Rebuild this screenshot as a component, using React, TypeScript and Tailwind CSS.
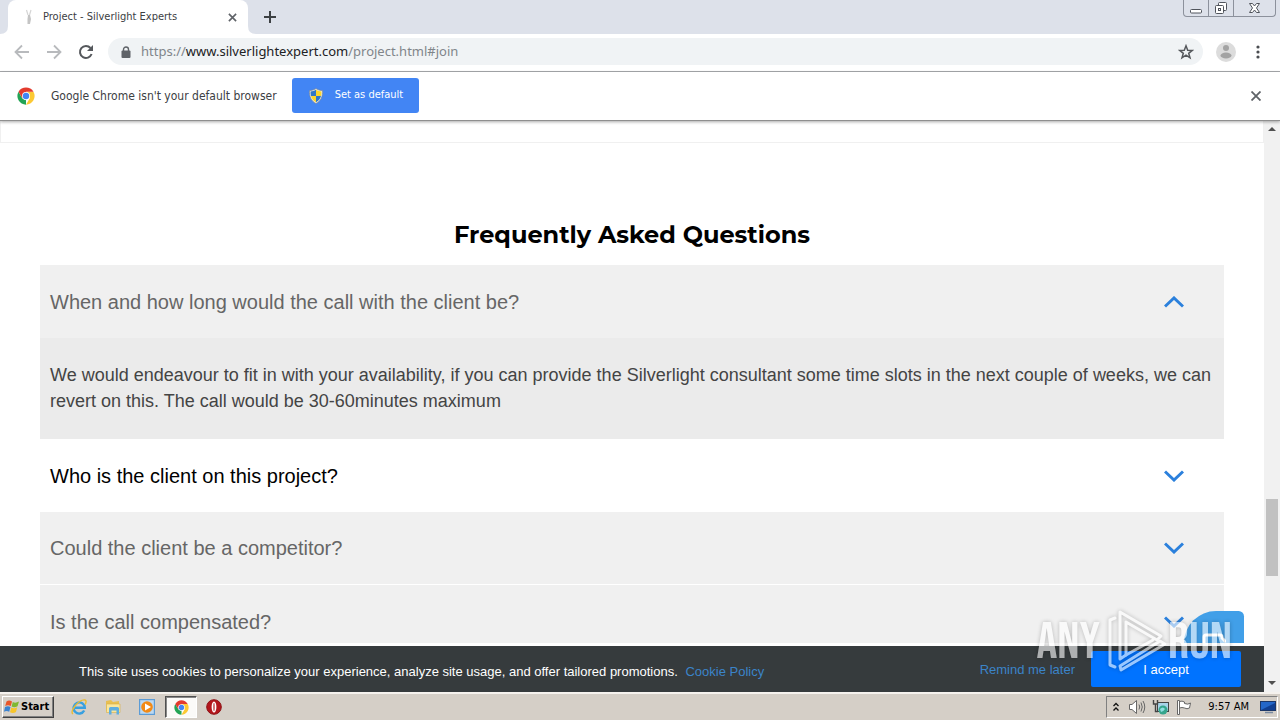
import { useState } from "react";
import type { ReactNode } from "react";

const faqs = [
  {
    q: "When and how long would the call with the client be?",
    a: "We would endeavour to fit in with your availability, if you can provide the Silverlight consultant some time slots in the next couple of weeks, we can revert on this. The call would be 30-60minutes maximum",
    tone: "bg-[#f0f0f0] text-[#666]",
  },
  { q: "Who is the client on this project?", a: "", tone: "bg-white text-black" },
  { q: "Could the client be a competitor?", a: "", tone: "bg-[#f0f0f0] text-[#666] border-b border-white" },
  { q: "Is the call compensated?", a: "", tone: "bg-[#f0f0f0] text-[#666]" },
];

function ChromeLogo({ className }: { className: string }) {
  return (
    <svg viewBox="0 0 48 48" className={className} aria-hidden="true">
      <circle cx="24" cy="24" r="23" fill="#fff" />
      <path d="M4.1 12.5 L14 29.7 L24 35.5 L24 47 A23 23 0 0 1 4.1 12.5 Z" fill="#23a455" />
      <path d="M43.9 12.5 L24 12.5 L34 29.7 L24 47 A23 23 0 0 0 43.9 12.5 Z" fill="#fcc934" />
      <path d="M4.1 12.5 L14 29.7 L24 24 L24 12.5 L43.9 12.5 A23 23 0 0 0 4.1 12.5 Z" fill="#e33b2e" />
      <circle cx="24" cy="24" r="10.5" fill="#fff" />
      <circle cx="24" cy="24" r="8.5" fill="#4285f4" />
    </svg>
  );
}

function Shield() {
  return (
    <svg viewBox="0 0 16 16" className="h-4 w-4" aria-hidden="true">
      <path d="M8 .5 C6 2 3.500 2.500 1.500 2.500 C1 8 3 13 8 15.500 C13 13 15 8 14.500 2.500 C12.500 2.500 10 2 8 .5Z" fill="#e8e8e0" stroke="#77808c" strokeWidth=".6" />
      <path d="M8 1.800 C6.300 3 4.500 3.500 2.600 3.500 C2.500 5 2.600 6.500 3 8 L8 8Z" fill="#2f76c9" />
      <path d="M8 1.800 C9.700 3 11.500 3.500 13.400 3.500 C13.500 5 13.400 6.500 13 8 L8 8Z" fill="#fbd52d" />
      <path d="M3 8 C3.800 10.800 5.400 12.900 8 14.300 L8 8Z" fill="#fbd52d" />
      <path d="M13 8 C12.200 10.800 10.600 12.900 8 14.300 L8 8Z" fill="#2f76c9" />
    </svg>
  );
}

function TitleStrip() {
  return (
    <header className="flex h-[34px] shrink-0 items-start justify-between bg-[#dde1ea]">
      <div className="flex h-full items-end">
        <svg viewBox="0 0 8 8" className="h-2 w-2 fill-white" aria-hidden="true">
          <path d="M0 8 H8 V0 Q8 8 0 8Z" />
        </svg>
        <div className="flex h-full w-60 items-center rounded-t-lg bg-white pr-2 pl-[15px] text-[#3c4043]">
          <svg viewBox="0 0 12 16" className="mr-2 h-4 w-3" fill="none" aria-hidden="true">
            <path d="M3.500 1 L5 6 M8 1 L6.500 6" stroke="#d5d5d5" strokeWidth="1.200" />
            <path d="M5 6 L7 6 L8 10 L7 15 L4.500 15 L4.500 10Z" fill="#c4c4c4" />
          </svg>
          <span className="flex-1 truncate text-[11px]">Project - Silverlight Experts</span>
          <button aria-label="Close tab" className="grid h-4 w-4 place-items-center">
            <svg viewBox="0 0 10 10" className="h-[9px] w-[9px]" stroke="#5f6368" strokeWidth="1.800">
              <path d="M1 1 L9 9 M9 1 L1 9" />
            </svg>
          </button>
        </div>
        <svg viewBox="0 0 8 8" className="h-2 w-2 fill-white" aria-hidden="true">
          <path d="M0 0 V8 H8 Q0 8 0 0Z" />
        </svg>
        <button aria-label="New tab" className="ml-2 grid h-full w-3 place-items-center">
          <svg viewBox="0 0 12 12" className="h-3 w-3" stroke="#3c4043" strokeWidth="2">
            <path d="M6 0 V12 M0 6 H12" />
          </svg>
        </button>
      </div>
      <div className="mr-1 flex h-[17px] divide-x divide-[#8c919c] rounded-b-[4px] border border-t-0 border-[#8c919c]">
        <button aria-label="Minimize" className="grid w-[25px] place-items-center">
          <svg viewBox="0 0 12 14" className="h-[14px] w-3" fill="#fff" stroke="#50545c">
            <rect x=".5" y="8.500" width="11" height="3.500" rx="1" />
          </svg>
        </button>
        <button aria-label="Restore" className="grid w-[25px] place-items-center">
          <svg viewBox="0 0 14 14" className="h-[14px] w-[14px]" fill="#fff" stroke="#50545c">
            <rect x="4.500" y="1.500" width="8" height="8" rx="1" />
            <rect x="1.500" y="4.500" width="8" height="8" rx="1" />
            <rect x="4.500" y="7.500" width="2" height="2" />
          </svg>
        </button>
        <button aria-label="Close window" className="grid w-[41px] place-items-center">
          <svg viewBox="0 0 14 12" className="h-3 w-[14px]" fill="#fff" stroke="#50545c">
            <path d="M1.500 1.500 H4.500 L6.500 4 L8.500 1.500 H11.500 L8.500 6 L11.500 10.500 H8.500 L6.500 8 L4.500 10.500 H1.500 L4.500 6Z" />
          </svg>
        </button>
      </div>
    </header>
  );
}

function Toolbar() {
  return (
    <nav className="flex h-[38px] shrink-0 items-center border-b border-[#a9abae] bg-white pr-5 pb-[2px] pl-[14px]">
      <button aria-label="Back">
        <svg viewBox="0 0 16 16" className="h-4 w-4" fill="none" stroke="#b8babd" strokeWidth="1.800">
          <path d="M15 8 H2 M8 1.500 L1.500 8 L8 14.500" />
        </svg>
      </button>
      <button aria-label="Forward" className="ml-4">
        <svg viewBox="0 0 16 16" className="h-4 w-4" fill="none" stroke="#b8babd" strokeWidth="1.800">
          <path d="M1 8 H14 M8 1.500 L14.500 8 L8 14.500" />
        </svg>
      </button>
      <button aria-label="Reload" className="ml-4">
        <svg viewBox="0 0 16 16" className="h-4 w-4" fill="none" stroke="#55585c" strokeWidth="2">
          <path d="M13.600 10 A6 6 0 1 1 12.500 4" />
          <path d="M15 1 V7 H9Z" fill="#55585c" stroke="none" />
        </svg>
      </button>
      <div className="ml-[14px] flex h-[27px] flex-1 items-center rounded-full bg-[#f0f3f5] pr-[9px] pl-[13px]">
        <svg viewBox="0 0 10 12" className="h-3 w-[10px]" aria-hidden="true">
          <rect x=".5" y="4.500" width="9" height="7.500" rx="1" fill="#5f6368" />
          <path d="M2.500 5 V3.500 A2.500 2.500 0 0 1 7.500 3.500 V5" fill="none" stroke="#5f6368" strokeWidth="1.400" />
        </svg>
        <div className="ml-[10px] flex-1 font-['Noto_Sans','Open_Sans',sans-serif] text-[13px] text-[#80858a]">
          https://<span className="text-[#202124]">www.silverlightexpert.com</span>/project.html#join
        </div>
        <button aria-label="Bookmark this page">
          <svg viewBox="0 0 16 16" className="h-4 w-4" fill="none" stroke="#55585c" strokeWidth="1.500">
            <path d="M8 1.800 L9.700 6.200 L14.300 6.400 L10.700 9.300 L12 13.800 L8 11.200 L4 13.800 L5.300 9.300 L1.700 6.400 L6.300 6.200Z" />
          </svg>
        </button>
      </div>
      <button aria-label="Profile" className="ml-[13px]">
        <svg viewBox="0 0 20 20" className="h-5 w-5">
          <circle cx="10" cy="10" r="10" fill="#dcdcdc" />
          <circle cx="10" cy="6" r="3" fill="#a3a3a3" />
          <ellipse cx="10" cy="13.500" rx="5.500" ry="3" fill="#a3a3a3" />
        </svg>
      </button>
      <button aria-label="Menu" className="ml-5">
        <svg viewBox="0 0 4 14" className="h-[14px] w-1" fill="#4a4d51">
          <circle cx="2" cy="2" r="1.600" />
          <circle cx="2" cy="7" r="1.600" />
          <circle cx="2" cy="12" r="1.600" />
        </svg>
      </button>
    </nav>
  );
}

function InfoBar() {
  return (
    <div className="relative z-10 flex h-[49px] shrink-0 items-center border-b border-[#8f8f8f] bg-white pr-[19px] pb-[1px] pl-[17px] shadow-[0_1px_3px_#0005]">
      <ChromeLogo className="h-[18px] w-[18px]" />
      <span className="ml-4 text-[12px] text-[#3c4043]">Google Chrome isn't your default browser</span>
      <button className="ml-[15px] flex h-[35px] items-center gap-[11px] rounded-[3px] bg-[#4285f4] px-4 text-[11px] text-white">
        <Shield />
        Set as default
      </button>
      <button aria-label="Dismiss" className="ml-auto">
        <svg viewBox="0 0 10 10" className="h-[10px] w-[10px]" stroke="#5f6368" strokeWidth="1.800">
          <path d="M.5 .5 L9.500 9.500 M9.500 .5 L.5 9.500" />
        </svg>
      </button>
    </div>
  );
}

function Faq() {
  const [open, setOpen] = useState(0);
  return (
    <section className="px-10 pt-[72px] font-['Liberation_Sans',Arial,sans-serif]">
      <h2 className="mb-[10px] text-center font-['Montserrat','Inter',sans-serif] text-[24px] leading-10 font-bold text-black">
        Frequently Asked Questions
      </h2>
      {faqs.map((item, i) => (
        <div key={item.q}>
          <button
            aria-expanded={open === i}
            onClick={() => setOpen(open === i ? -1 : i)}
            className={`flex h-[73px] w-full items-center justify-between pr-10 pl-[10px] text-left text-[20px] ${item.tone}`}
          >
            {item.q}
            <svg
              viewBox="0 0 20 12"
              className={`h-3 w-5 ${open === i ? "rotate-180" : ""}`}
              fill="none"
              stroke="#2b80dc"
              strokeWidth="3"
              aria-hidden="true"
            >
              <path d="M1 1.500 L10 10 L19 1.500" />
            </svg>
          </button>
          {open === i && item.a && (
            <p className="bg-[#ebebeb] px-[10px] pt-6 pb-[25px] text-[18px] leading-[26px] text-[#444]">{item.a}</p>
          )}
        </div>
      ))}
    </section>
  );
}

function ScrollBar() {
  return (
    <div className="flex w-4 shrink-0 flex-col items-center bg-[#f1f1f1]" aria-hidden="true">
      <svg viewBox="0 0 16 16" className="h-4 w-4" fill="#505050">
        <path d="M4 10 L8 6 L12 10Z" />
      </svg>
      <div className="grow-[361]" />
      <div className="w-3 grow-[77] bg-[#c1c1c1]" />
      <div className="grow-[100]" />
      <svg viewBox="0 0 16 16" className="h-4 w-4" fill="#505050">
        <path d="M4 5 L8 9 L12 5Z" />
      </svg>
    </div>
  );
}

function Watermark() {
  return (
    <div className="pointer-events-none absolute right-8 bottom-[19px] flex h-16 items-center font-['Bebas_Neue','Barlow_Condensed','Liberation_Sans_Narrow','Liberation_Sans',sans-serif] text-[52px] leading-none text-white opacity-60 drop-shadow-[0_0_2px_#0006]">
      <span className="pt-1">ANY</span>
      <svg viewBox="0 0 60 64" className="ml-2 h-16 w-[60px]" fill="none" stroke="#fff" strokeWidth="3" strokeLinejoin="round" strokeLinecap="round">
        <path d="M7 9 L2 11 V56 L7 58" />
        <path d="M12 50 V3 L53 27 L49 31 L18 13 V46 L12 50" />
        <path d="M18 46 L45 31 M12 57 L52 32 L57 35 L13 61Z" />
      </svg>
      <span className="pt-1">RUN</span>
    </div>
  );
}

function CookieBar() {
  return (
    <div className="flex h-[46px] shrink-0 items-center bg-[#363b3d] pr-[23px] pl-[79px] font-['Liberation_Sans',Arial,sans-serif] text-[13px] text-white">
      <p className="flex-1 pt-[6px]">
        This site uses cookies to personalize your experience, analyze site usage, and offer tailored promotions.{" "}
        <a href="#cookies" className="ml-1 text-[#3b84c9]">Cookie Policy</a>
      </p>
      <button className="mr-4 pt-[2px] text-[#3b84c9]">Remind me later</button>
      <button className="h-9 w-[150px] rounded-[2px] bg-[#0073ff] pt-[2px]">I accept</button>
    </div>
  );
}

function QuickIcon({ label, children }: { label: string; children: ReactNode }) {
  return (
    <button aria-label={label} className="grid h-5 w-[34px] place-items-center">
      <svg viewBox="0 0 16 16" className="h-4 w-4">{children}</svg>
    </button>
  );
}

function Taskbar() {
  return (
    <footer className="flex h-[28px] shrink-0 items-center border-t-2 border-[#f5f2ee] bg-[#d5cfc7] text-[11px] text-black">
      <button className="ml-[2px] flex h-[22px] w-[52px] items-center gap-[1px] border border-t-white border-r-[#404040] border-b-[#404040] border-l-white pl-[1px] text-[11px] font-bold shadow-[inset_-1px_-1px_#808080]">
        <svg viewBox="0 0 16 16" className="h-4 w-4 shrink-0" aria-hidden="true">
          <path d="M2.500 2.500 Q5 .5 8 2.500 L6.800 7 Q4 5.500 1.200 7Z" fill="#e9562a" />
          <path d="M8.800 3 Q11.500 4.500 15 2.500 L13.500 7.200 Q10.500 9 7.600 7.500Z" fill="#7fb832" />
          <path d="M1 8 Q4 6.500 6.500 8 L5.200 12.800 Q2.500 11.200 0 12.800Z" fill="#3b83d0" />
          <path d="M7.300 8.500 Q10.500 10 13.200 8.200 L12 13 Q9 14.800 6 13.200Z" fill="#f7c52a" />
        </svg>
        Start
      </button>
      <div className="ml-2 flex items-center">
        <QuickIcon label="Internet Explorer">
          <path d="M13.200 11.500 A5.600 5.600 0 1 1 13.800 8.800 H4" fill="none" stroke="#38a0e0" strokeWidth="2.400" />
          <path d="M2 15 C-2 12.500 8 0 14 1 C15.800 1.500 15 4 14 5.500" fill="none" stroke="#eabb32" strokeWidth="1.400" />
        </QuickIcon>
        <QuickIcon label="Explorer">
          <path d="M1 2 L6 1 L8 3 L14 2 V12 H1Z" fill="#e8bf52" />
          <path d="M1.500 5 H15 V13.500 H1.500Z" fill="#fae69d" stroke="#d9b045" strokeWidth=".6" />
          <path d="M4 15.500 V9.500 Q4 8 5.500 8 H12.500 Q14 8 14 9.500 V15.500 H11.500 V11.500 H6.500 V15.500Z" fill="#5faee0" />
        </QuickIcon>
        <QuickIcon label="Media Player">
          <rect x=".6" y=".6" width="14.800" height="14.800" fill="#bcd9f2" stroke="#5c9cd6" strokeWidth="1.200" />
          <circle cx="8" cy="8" r="5.800" fill="#f28a16" />
          <path d="M6 4.500 L12 8 L6 11.500Z" fill="#fff" />
        </QuickIcon>
        <button aria-label="Chrome" className="ml-[1px] grid h-[22px] w-[32px] place-items-center border border-t-[#505050] border-r-white border-b-white border-l-[#505050] bg-[#fbfaf8] shadow-[inset_1px_1px_#888]">
          <ChromeLogo className="h-[15px] w-[15px]" />
        </button>
        <QuickIcon label="Opera">
          <circle cx="8" cy="8" r="7.300" fill="#b3151b" stroke="#8d1115" />
          <ellipse cx="8" cy="8" rx="2.400" ry="5.500" fill="#fff" />
          <ellipse cx="8" cy="8" rx=".6" ry="4.300" fill="#b3151b" />
        </QuickIcon>
      </div>
      <div className="mr-[2px] ml-auto flex h-[22px] items-center border border-t-[#808080] border-r-white border-b-white border-l-[#808080] pr-[1px] pl-[5px]">
        <svg viewBox="0 0 8 10" className="h-[10px] w-2" fill="none" stroke="#111" strokeWidth="1.300" aria-hidden="true">
          <path d="M1.500 4 L4 1.500 L6.500 4 M1.500 8.500 L4 6 L6.500 8.500" />
        </svg>
        <svg viewBox="0 0 18 16" className="ml-2 h-4 w-[18px]" fill="#fff" stroke="#666" aria-hidden="true">
          <path d="M1.500 5.500 H4 L8.500 1.500 V14.500 L4 10.500 H1.500Z" />
          <path d="M11 5.500 Q12.500 8 11 10.500 M13 3.500 Q15.500 8 13 12.500 M15 2 Q18.500 8 15 14" fill="none" />
        </svg>
        <svg viewBox="0 0 18 16" className="ml-[6px] h-4 w-[18px]" aria-hidden="true">
          <rect x="5.500" y="3.500" width="11" height="9" fill="#a7d3e8" stroke="#444" />
          <path d="M1.500 1 V5 H5.500 V1 M3.500 5 V12.500 H6" fill="none" stroke="#444" strokeWidth="1.400" />
          <circle cx="11" cy="11" r="4.500" fill="#35a58c" />
          <path d="M8 10 Q11 7 13 10 Q11 13 9 13Z" fill="#8fdde0" />
        </svg>
        <svg viewBox="0 0 16 16" className="ml-[6px] h-4 w-4" fill="#fff" stroke="#666" aria-hidden="true">
          <path d="M1.500 1.500 H3.500 V15.500 H1.500Z M3.500 2.500 Q6 1.500 8.500 3 V4.500 Q12 6 14.500 4 L13.500 9 Q11 10.500 8.500 9 Q6 8 3.500 9Z" />
        </svg>
        <time className="ml-4">9:57 AM</time>
        <svg viewBox="0 0 16 14" className="ml-[11px] h-[14px] w-4" aria-hidden="true">
          <rect x=".5" y="1.500" width="15" height="9" fill="#2467c9" stroke="#1c3768" />
          <path d="M1 10 L15 3 V10Z" fill="#113f91" />
          <path d="M5 12.500 H13" stroke="#7a8aa0" strokeWidth="1.500" />
        </svg>
      </div>
    </footer>
  );
}

export default function App() {
  return (
    <div className="flex h-screen flex-col overflow-hidden bg-white font-['DejaVu_Sans_Condensed','DejaVu_Sans',sans-serif]">
      <TitleStrip />
      <Toolbar />
      <InfoBar />
      <div className="flex min-h-0 flex-1">
        <div className="relative flex min-w-0 flex-1 flex-col">
          <main className="relative mb-[3px] min-h-0 flex-1 overflow-hidden">
            <div className="h-[22px] border-x border-b border-[#f0f0f0]" />
            <Faq />
            <button aria-label="Chat" className="absolute right-5 bottom-0 grid h-8 w-[60px] place-items-center rounded-tl-[36px] rounded-tr-md bg-[#419fe8]">
              <svg viewBox="0 0 24 10" className="mt-[22px] h-[10px] w-6" fill="none" stroke="#fff" strokeWidth="3">
                <path d="M2 10 V4 Q2 2 4 2 H18 Q20 2 20 4 V5 L24 9" />
              </svg>
            </button>
          </main>
          <CookieBar />
          <Watermark />
        </div>
        <ScrollBar />
      </div>
      <Taskbar />
    </div>
  );
}
